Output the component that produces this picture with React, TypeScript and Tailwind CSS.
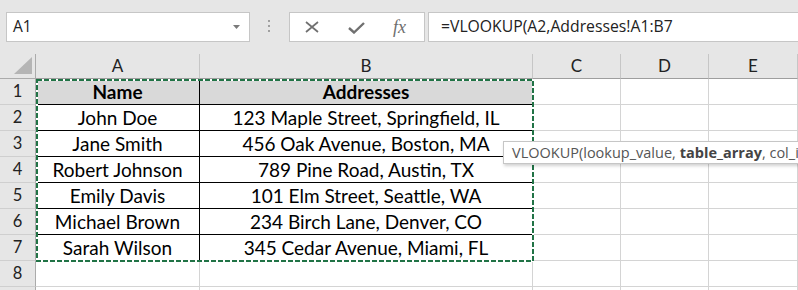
const cols = ['A', 'B', 'C', 'D', 'E'];
const rows = [
  ['Name', 'Addresses'],
  ['John Doe', '123 Maple Street, Springfield, IL'],
  ['Jane Smith', '456 Oak Avenue, Boston, MA'],
  ['Robert Johnson', '789 Pine Road, Austin, TX'],
  ['Emily Davis', '101 Elm Street, Seattle, WA'],
  ['Michael Brown', '234 Birch Lane, Denver, CO'],
  ['Sarah Wilson', '345 Cedar Avenue, Miami, FL'],
  ['', ''],
  ['', ''],
];

const uiFont = { fontFamily: '"Open Sans", "Noto Sans", sans-serif' };
const cellFont = { fontFamily: 'Lato, "Liberation Sans", sans-serif' };

function FormulaBar() {
  return (
    <div className="h-[54px] bg-[#e6e6e6] flex items-start pt-[12px] pl-[6px]" style={uiFont}>
      <div className="w-[244px] h-[30px] border border-[#c6c6c6] bg-white flex items-center justify-between pl-[6px] pr-[9px] text-[15.5px] text-[#222]">
        <span>A1</span>
        <svg width="7" height="4" viewBox="0 0 7 4">
          <path d="M0 0H7L3.5 4Z" fill="#7a7a7a" />
        </svg>
      </div>
      <div className="ml-[18px] mt-[8px] flex flex-col gap-[3px]">
        <div className="w-[2px] h-[2px] bg-[#a0a0a0]" />
        <div className="w-[2px] h-[2px] bg-[#a0a0a0]" />
        <div className="w-[2px] h-[2px] bg-[#a0a0a0]" />
      </div>
      <div className="ml-[19px] w-[136px] h-[30px] border border-[#c6c6c6] bg-white flex items-center">
        <svg className="ml-[14px]" width="16" height="12" viewBox="0 0 16 12">
          <path d="M2 1L14 11M14 1L2 11" stroke="#707070" strokeWidth="1.7" />
        </svg>
        <svg className="ml-[28px] mt-[2px]" width="17" height="12" viewBox="0 0 17 12">
          <path d="M1 6L6 10.5L16 1" stroke="#707070" strokeWidth="2.4" fill="none" />
        </svg>
        <span
          className="ml-[28px] text-[18px] italic text-[#6e6e6e] leading-none"
          style={{ fontFamily: '"Liberation Serif", serif' }}
        >
          fx
        </span>
      </div>
      <div className="ml-[3px] flex-1 h-[30px] border border-[#c6c6c6] border-r-0 bg-white flex items-center pl-[12px] text-[15.75px] text-[#222]">
        =VLOOKUP(A2,Addresses!A1:B7
      </div>
    </div>
  );
}

function Grid() {
  return (
    <div className="grid grid-cols-[36px_164px_333px_88px_88px_89px] grid-rows-[25px_repeat(9,26px)]" style={cellFont}>
      <div className="bg-[#e6e6e6] border-r border-b border-[#ababab] relative">
        <svg className="absolute right-[3px] bottom-[4px]" width="18" height="17" viewBox="0 0 18 17">
          <path d="M18 0V17H0Z" fill="#b5b5b5" />
        </svg>
      </div>
      {cols.map((c) => (
        <div
          key={c}
          className="bg-[#e6e6e6] border-r border-r-[#c6c6c6] border-b border-b-[#9e9e9e] flex items-center justify-center text-[17px] text-[#222]"
        >
          {c}
        </div>
      ))}
      {rows.map((r, i) => {
        const inTable = i < 7;
        const head = i === 0;
        const line = inTable ? 'border-black' : 'border-[#d4d4d4]';
        return (
          <div key={i} className="contents">
            <div className="bg-[#e6e6e6] border-r border-r-[#ababab] border-b border-b-[#cfcfcf] flex items-center justify-center text-[16.5px] text-[#222]">
              {i < 8 ? i + 1 : ''}
            </div>
            <div
              className={`border-r border-b ${line} ${head ? 'bg-[#d9d9d9] font-bold' : 'bg-white'} flex items-end justify-center text-[19px] leading-[24px] text-black`}
            >
              {r[0]}
            </div>
            <div
              className={`border-r border-b ${line} ${head ? 'bg-[#d9d9d9] font-bold' : 'bg-white'} flex items-end justify-center text-[19px] leading-[24px] text-black`}
            >
              {r[1]}
            </div>
            <div className="border-r border-b border-[#d4d4d4]" />
            <div className="border-r border-b border-[#d4d4d4]" />
            <div className="border-r border-b border-[#d4d4d4]" />
          </div>
        );
      })}
    </div>
  );
}

export default function App() {
  return (
    <div className="w-[798px] h-[290px] overflow-hidden relative bg-white">
      <FormulaBar />
      <Grid />
      <svg className="absolute left-0 top-0 pointer-events-none" width="798" height="290">
        <rect x="37" y="80" width="496" height="181" fill="none" stroke="#ffffff" strokeWidth="2" />
        <rect x="37" y="80" width="496" height="181" fill="none" stroke="#217346" strokeWidth="2" strokeDasharray="5 2" />
      </svg>
      <div
        className="absolute left-[503px] top-[141px] w-[320px] h-[23px] bg-white border border-[#c6c6c6] shadow-[1px_2px_3px_rgba(0,0,0,0.18)] flex items-center pl-[8px] text-[14.5px] text-[#555] whitespace-nowrap"
        style={uiFont}
      >
        VLOOKUP(lookup_value, <b className="font-bold text-[#444] ml-[4px]">table_array</b>, col_index_num, [range_lookup])
      </div>
    </div>
  );
}
